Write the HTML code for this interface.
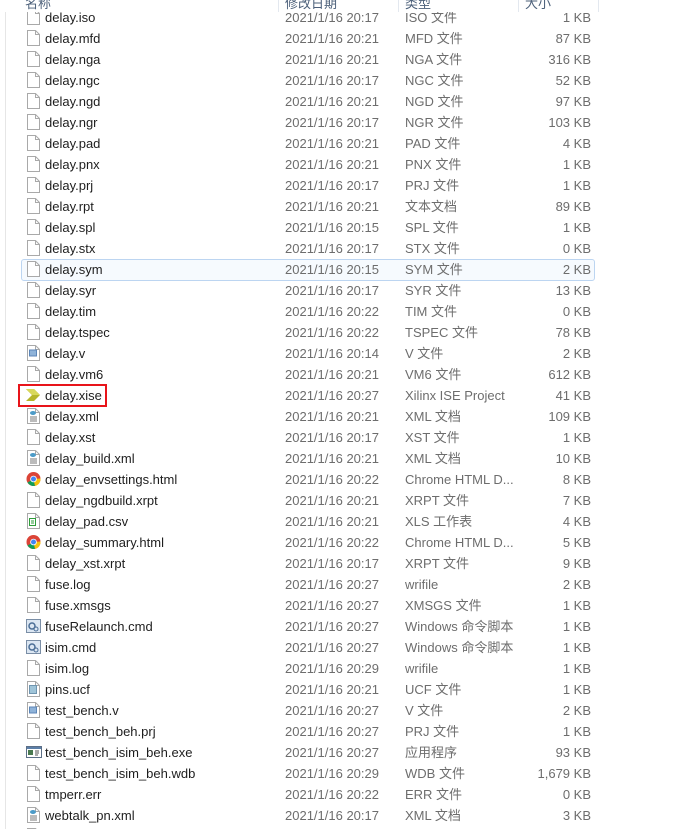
<!DOCTYPE html>
<html><head><meta charset="utf-8">
<style>
*{margin:0;padding:0;box-sizing:border-box}
body{width:682px;height:829px;overflow:hidden;background:#fff;font-family:"Liberation Sans","Noto Sans CJK SC",sans-serif;font-size:13px;color:#1e1e1e;position:relative}
.hd{position:absolute;top:0;left:0;width:682px;height:12px;overflow:hidden;background:#fff}
.hd span{position:absolute;top:-7px;color:#4c607a;font-size:13px}
.sep{position:absolute;top:0;width:1px;height:12px;background:#e3e8ef}
.r{position:absolute;left:0;width:682px;height:21px;line-height:21px}
.r svg{position:absolute;left:26px;top:2px}
.n{position:absolute;left:45px;white-space:nowrap}
.d{position:absolute;left:285px;color:#6d6d6d}
.t{position:absolute;left:405px;color:#6d6d6d;white-space:nowrap}
.s{position:absolute;right:91px;color:#6d6d6d}
.hov{position:absolute;left:21px;top:259px;width:574px;height:22px;border:1px solid #bcd5f1;border-radius:3px;background:#f6fafe}
.red{position:absolute;left:18px;top:384px;width:89px;height:23px;border:2px solid #e8141a;z-index:2}
.lline{position:absolute;left:5px;top:12px;width:1px;height:817px;background:#e6e6e6}
</style></head><body>
<svg width="0" height="0" style="position:absolute">
<defs>
<g id="b"><path d="M1.5 .5h8l4 4v11h-12z" fill="#fff" stroke="#a9a9a9"/><path d="M9.5 .5v4h4" fill="none" stroke="#a9a9a9"/></g>
<g id="v"><use href="#b"/><rect x="3.5" y="5" width="7" height="6" fill="#8fb3d9" stroke="#5c86b8"/></g>
<g id="u"><use href="#b"/><rect x="3.5" y="4.5" width="7" height="8" fill="#9fc4d8" stroke="#6f95b0"/></g>
<g id="m"><use href="#b"/><ellipse cx="7" cy="5" rx="3" ry="2" fill="#4c9bc8"/><path d="M4 9h7M4 11h7M4 13h7" stroke="#777"/></g>
<g id="s"><use href="#b"/><rect x="3.5" y="5.5" width="6" height="7" fill="none" stroke="#2e9d3a"/><path d="M5 8h3M5 10h3" stroke="#2e9d3a"/></g>
<g id="g"><rect x=".5" y="1.5" width="14" height="13" fill="#dbe6f2" stroke="#7a8ea6"/><circle cx="6" cy="8" r="3" fill="none" stroke="#4a6d96" stroke-width="1.5"/><circle cx="10" cy="11" r="2" fill="none" stroke="#4a6d96"/></g>
<g id="e"><rect x=".5" y="2.5" width="15" height="11" fill="#fff" stroke="#5c6f87"/><rect x="1" y="3" width="14" height="2" fill="#5c7fa8"/><rect x="2" y="6" width="5" height="5" fill="#4a7a50"/><path d="M9 7h4M9 9h4M9 11h3" stroke="#555"/></g>
<g id="c"><circle cx="7.5" cy="8" r="7" fill="#db4437"/><path d="M7.5 8L1.5 11.5A7 7 0 0 0 9 14.9z" fill="#0f9d58"/><path d="M7.5 8l7-.5A7 7 0 0 1 9 14.9z" fill="#f4c20d"/><circle cx="7.5" cy="8" r="3.3" fill="#fff"/><circle cx="7.5" cy="8" r="2.5" fill="#4285f4"/></g>
<g id="x"><path d="M0 2h8l6 6-6 6H0l6-6z" fill="#b5b52a"/><path d="M0 2h8l6 6H6z" fill="#d8d85a"/></g>
</defs></svg>
<div class="lline"></div>
<div class="hd"><span style="left:25px">名称</span><span style="left:285px">修改日期</span><span style="left:405px">类型</span><span style="left:525px">大小</span>
<div class="sep" style="left:278px"></div><div class="sep" style="left:398px"></div><div class="sep" style="left:518px"></div><div class="sep" style="left:598px"></div></div>
<div class="hov"></div>
<div class="red"></div>
<div style="position:absolute;top:12px;left:0;width:682px;height:817px;overflow:hidden">
<div style="position:absolute;top:-31px;left:0">
<div class="r" style="top:26px"><svg width="16" height="16"><use href="#b"/></svg><span class="n">delay.iso</span><span class="d">2021/1/16 20:17</span><span class="t">ISO 文件</span><span class="s">1 KB</span></div>
<div class="r" style="top:47px"><svg width="16" height="16"><use href="#b"/></svg><span class="n">delay.mfd</span><span class="d">2021/1/16 20:21</span><span class="t">MFD 文件</span><span class="s">87 KB</span></div>
<div class="r" style="top:68px"><svg width="16" height="16"><use href="#b"/></svg><span class="n">delay.nga</span><span class="d">2021/1/16 20:21</span><span class="t">NGA 文件</span><span class="s">316 KB</span></div>
<div class="r" style="top:89px"><svg width="16" height="16"><use href="#b"/></svg><span class="n">delay.ngc</span><span class="d">2021/1/16 20:17</span><span class="t">NGC 文件</span><span class="s">52 KB</span></div>
<div class="r" style="top:110px"><svg width="16" height="16"><use href="#b"/></svg><span class="n">delay.ngd</span><span class="d">2021/1/16 20:21</span><span class="t">NGD 文件</span><span class="s">97 KB</span></div>
<div class="r" style="top:131px"><svg width="16" height="16"><use href="#b"/></svg><span class="n">delay.ngr</span><span class="d">2021/1/16 20:17</span><span class="t">NGR 文件</span><span class="s">103 KB</span></div>
<div class="r" style="top:152px"><svg width="16" height="16"><use href="#b"/></svg><span class="n">delay.pad</span><span class="d">2021/1/16 20:21</span><span class="t">PAD 文件</span><span class="s">4 KB</span></div>
<div class="r" style="top:173px"><svg width="16" height="16"><use href="#b"/></svg><span class="n">delay.pnx</span><span class="d">2021/1/16 20:21</span><span class="t">PNX 文件</span><span class="s">1 KB</span></div>
<div class="r" style="top:194px"><svg width="16" height="16"><use href="#b"/></svg><span class="n">delay.prj</span><span class="d">2021/1/16 20:17</span><span class="t">PRJ 文件</span><span class="s">1 KB</span></div>
<div class="r" style="top:215px"><svg width="16" height="16"><use href="#b"/></svg><span class="n">delay.rpt</span><span class="d">2021/1/16 20:21</span><span class="t">文本文档</span><span class="s">89 KB</span></div>
<div class="r" style="top:236px"><svg width="16" height="16"><use href="#b"/></svg><span class="n">delay.spl</span><span class="d">2021/1/16 20:15</span><span class="t">SPL 文件</span><span class="s">1 KB</span></div>
<div class="r" style="top:257px"><svg width="16" height="16"><use href="#b"/></svg><span class="n">delay.stx</span><span class="d">2021/1/16 20:17</span><span class="t">STX 文件</span><span class="s">0 KB</span></div>
<div class="r" style="top:278px"><svg width="16" height="16"><use href="#b"/></svg><span class="n">delay.sym</span><span class="d">2021/1/16 20:15</span><span class="t">SYM 文件</span><span class="s">2 KB</span></div>
<div class="r" style="top:299px"><svg width="16" height="16"><use href="#b"/></svg><span class="n">delay.syr</span><span class="d">2021/1/16 20:17</span><span class="t">SYR 文件</span><span class="s">13 KB</span></div>
<div class="r" style="top:320px"><svg width="16" height="16"><use href="#b"/></svg><span class="n">delay.tim</span><span class="d">2021/1/16 20:22</span><span class="t">TIM 文件</span><span class="s">0 KB</span></div>
<div class="r" style="top:341px"><svg width="16" height="16"><use href="#b"/></svg><span class="n">delay.tspec</span><span class="d">2021/1/16 20:22</span><span class="t">TSPEC 文件</span><span class="s">78 KB</span></div>
<div class="r" style="top:362px"><svg width="16" height="16"><use href="#v"/></svg><span class="n">delay.v</span><span class="d">2021/1/16 20:14</span><span class="t">V 文件</span><span class="s">2 KB</span></div>
<div class="r" style="top:383px"><svg width="16" height="16"><use href="#b"/></svg><span class="n">delay.vm6</span><span class="d">2021/1/16 20:21</span><span class="t">VM6 文件</span><span class="s">612 KB</span></div>
<div class="r" style="top:404px"><svg width="16" height="16"><use href="#x"/></svg><span class="n">delay.xise</span><span class="d">2021/1/16 20:27</span><span class="t">Xilinx ISE Project</span><span class="s">41 KB</span></div>
<div class="r" style="top:425px"><svg width="16" height="16"><use href="#m"/></svg><span class="n">delay.xml</span><span class="d">2021/1/16 20:21</span><span class="t">XML 文档</span><span class="s">109 KB</span></div>
<div class="r" style="top:446px"><svg width="16" height="16"><use href="#b"/></svg><span class="n">delay.xst</span><span class="d">2021/1/16 20:17</span><span class="t">XST 文件</span><span class="s">1 KB</span></div>
<div class="r" style="top:467px"><svg width="16" height="16"><use href="#m"/></svg><span class="n">delay_build.xml</span><span class="d">2021/1/16 20:21</span><span class="t">XML 文档</span><span class="s">10 KB</span></div>
<div class="r" style="top:488px"><svg width="16" height="16"><use href="#c"/></svg><span class="n">delay_envsettings.html</span><span class="d">2021/1/16 20:22</span><span class="t">Chrome HTML D...</span><span class="s">8 KB</span></div>
<div class="r" style="top:509px"><svg width="16" height="16"><use href="#b"/></svg><span class="n">delay_ngdbuild.xrpt</span><span class="d">2021/1/16 20:21</span><span class="t">XRPT 文件</span><span class="s">7 KB</span></div>
<div class="r" style="top:530px"><svg width="16" height="16"><use href="#s"/></svg><span class="n">delay_pad.csv</span><span class="d">2021/1/16 20:21</span><span class="t">XLS 工作表</span><span class="s">4 KB</span></div>
<div class="r" style="top:551px"><svg width="16" height="16"><use href="#c"/></svg><span class="n">delay_summary.html</span><span class="d">2021/1/16 20:22</span><span class="t">Chrome HTML D...</span><span class="s">5 KB</span></div>
<div class="r" style="top:572px"><svg width="16" height="16"><use href="#b"/></svg><span class="n">delay_xst.xrpt</span><span class="d">2021/1/16 20:17</span><span class="t">XRPT 文件</span><span class="s">9 KB</span></div>
<div class="r" style="top:593px"><svg width="16" height="16"><use href="#b"/></svg><span class="n">fuse.log</span><span class="d">2021/1/16 20:27</span><span class="t">wrifile</span><span class="s">2 KB</span></div>
<div class="r" style="top:614px"><svg width="16" height="16"><use href="#b"/></svg><span class="n">fuse.xmsgs</span><span class="d">2021/1/16 20:27</span><span class="t">XMSGS 文件</span><span class="s">1 KB</span></div>
<div class="r" style="top:635px"><svg width="16" height="16"><use href="#g"/></svg><span class="n">fuseRelaunch.cmd</span><span class="d">2021/1/16 20:27</span><span class="t">Windows 命令脚本</span><span class="s">1 KB</span></div>
<div class="r" style="top:656px"><svg width="16" height="16"><use href="#g"/></svg><span class="n">isim.cmd</span><span class="d">2021/1/16 20:27</span><span class="t">Windows 命令脚本</span><span class="s">1 KB</span></div>
<div class="r" style="top:677px"><svg width="16" height="16"><use href="#b"/></svg><span class="n">isim.log</span><span class="d">2021/1/16 20:29</span><span class="t">wrifile</span><span class="s">1 KB</span></div>
<div class="r" style="top:698px"><svg width="16" height="16"><use href="#u"/></svg><span class="n">pins.ucf</span><span class="d">2021/1/16 20:21</span><span class="t">UCF 文件</span><span class="s">1 KB</span></div>
<div class="r" style="top:719px"><svg width="16" height="16"><use href="#v"/></svg><span class="n">test_bench.v</span><span class="d">2021/1/16 20:27</span><span class="t">V 文件</span><span class="s">2 KB</span></div>
<div class="r" style="top:740px"><svg width="16" height="16"><use href="#b"/></svg><span class="n">test_bench_beh.prj</span><span class="d">2021/1/16 20:27</span><span class="t">PRJ 文件</span><span class="s">1 KB</span></div>
<div class="r" style="top:761px"><svg width="16" height="16"><use href="#e"/></svg><span class="n">test_bench_isim_beh.exe</span><span class="d">2021/1/16 20:27</span><span class="t">应用程序</span><span class="s">93 KB</span></div>
<div class="r" style="top:782px"><svg width="16" height="16"><use href="#b"/></svg><span class="n">test_bench_isim_beh.wdb</span><span class="d">2021/1/16 20:29</span><span class="t">WDB 文件</span><span class="s">1,679 KB</span></div>
<div class="r" style="top:803px"><svg width="16" height="16"><use href="#b"/></svg><span class="n">tmperr.err</span><span class="d">2021/1/16 20:22</span><span class="t">ERR 文件</span><span class="s">0 KB</span></div>
<div class="r" style="top:824px"><svg width="16" height="16"><use href="#m"/></svg><span class="n">webtalk_pn.xml</span><span class="d">2021/1/16 20:17</span><span class="t">XML 文档</span><span class="s">3 KB</span></div>
<div class="r" style="top:845px"><svg width="16" height="16"><use href="#m"/></svg><span class="n">xilinx.xml</span></div>
</div></div>
</body></html>
